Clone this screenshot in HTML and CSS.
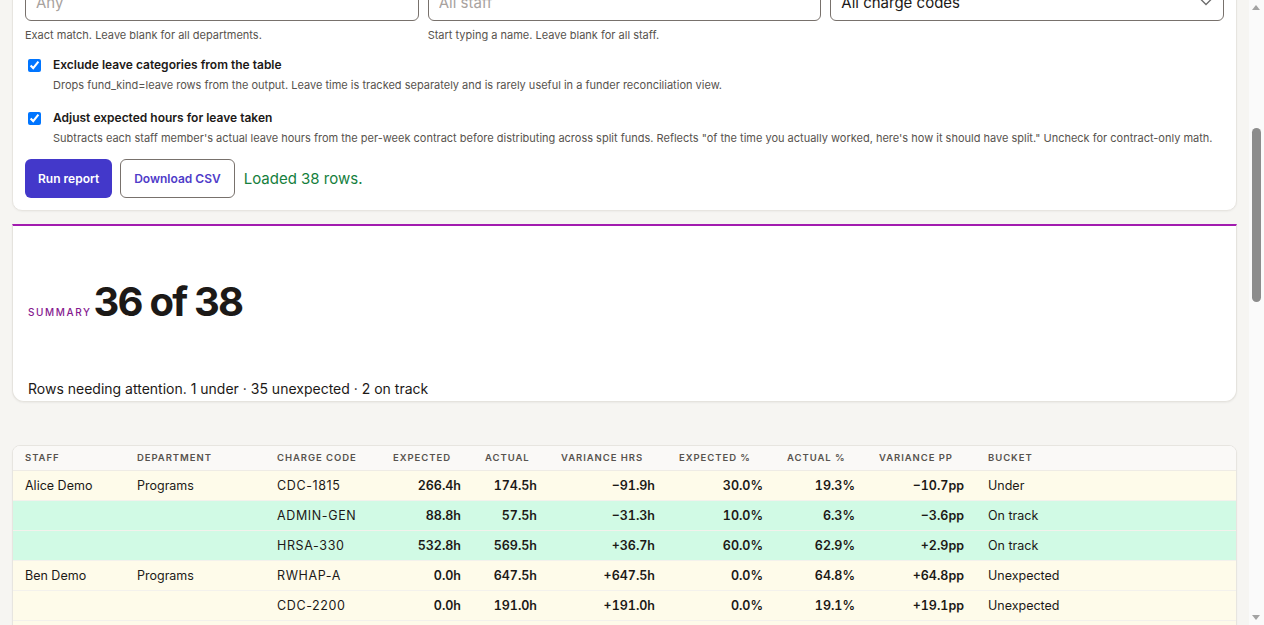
FILE: index.html
```html
<!DOCTYPE html>
<html lang="en">
<head>
    <meta charset="UTF-8">
    <meta name="viewport" content="width=device-width, initial-scale=1.0">
    <title>Funder Reconciliation</title>
    <link rel="stylesheet" href="styles.css">
</head>
<body>

    <nav class="topbar">
        <span class="brand">Timesheets</span>
        <a href="#">Entries</a>
        <a href="#">Staff</a>
        <a href="#" class="active">Reports</a>
        <a href="#">Settings</a>
    </nav>

    <main class="page">
        <header class="page-head">
            <h1>Funder reconciliation</h1>
            <p>Compare each staff member's expected split across charge codes with the hours they actually logged.</p>
        </header>

        <form class="card filters" onsubmit="event.preventDefault()">
            <h2 class="card-title">Report scope</h2>

            <div class="fields two">
                <div class="field">
                    <label for="date_from">Period start</label>
                    <input type="date" id="date_from" value="2024-07-01">
                    <small>First day of the reporting period.</small>
                </div>
                <div class="field">
                    <label for="date_to">Period end</label>
                    <input type="date" id="date_to" value="2025-06-30">
                    <small>Last day, inclusive.</small>
                </div>
            </div>

            <div class="fields three">
                <div class="field">
                    <label for="department">Department</label>
                    <input type="text" id="department" placeholder="Any">
                    <small>Exact match. Leave blank for all departments.</small>
                </div>
                <div class="field">
                    <label for="staff">Staff</label>
                    <input type="text" id="staff" placeholder="All staff">
                    <small>Start typing a name. Leave blank for all staff.</small>
                </div>
                <div class="field">
                    <label for="charge_code">Charge code</label>
                    <div class="select-wrap">
                        <select id="charge_code">
                            <option>All charge codes</option>
                            <option>ADMIN-GEN</option>
                            <option>CDC-1815</option>
                            <option>CDC-2200</option>
                            <option>HRSA-330</option>
                            <option>RWHAP-A</option>
                        </select>
                        <svg class="chevron" width="12" height="8" viewBox="0 0 12 8"><path d="M1 1.5l5 5 5-5" fill="none" stroke="#6b6b6b" stroke-width="1.3"/></svg>
                    </div>
                </div>
            </div>

            <label class="check">
                <input type="checkbox" checked>
                <span class="check-title">Exclude leave categories from the table</span>
                <span class="check-desc">Drops fund_kind=leave rows from the output. Leave time is tracked separately and is rarely useful in a funder reconciliation view.</span>
            </label>

            <label class="check">
                <input type="checkbox" checked>
                <span class="check-title">Adjust expected hours for leave taken</span>
                <span class="check-desc">Subtracts each staff member's actual leave hours from the per-week contract before distributing across split funds. Reflects "of the time you actually worked, here's how it should have split." Uncheck for contract-only math.</span>
            </label>

            <div class="actions">
                <button type="submit" class="btn-primary">Run report</button>
                <button type="button" class="btn-outline">Download CSV</button>
                <span class="status">Loaded 38 rows.</span>
            </div>
        </form>

        <section class="summary">
            <div class="summary-head">
                <span class="eyebrow">Summary</span>
                <span class="big">36 of 38</span>
            </div>
            <p class="summary-note">Rows needing attention. 1 under · 35 unexpected · 2 on track</p>
        </section>

        <section class="card table-card">
            <table>
                <colgroup>
                    <col style="width:112px"><col style="width:140px"><col style="width:116px">
                    <col style="width:92px"><col style="width:76px"><col style="width:118px">
                    <col style="width:108px"><col style="width:92px"><col style="width:109px"><col>
                </colgroup>
                <thead>
                    <tr>
                        <th>Staff</th><th>Department</th><th>Charge code</th><th>Expected</th><th>Actual</th>
                        <th>Variance hrs</th><th>Expected %</th><th>Actual %</th><th>Variance pp</th><th>Bucket</th>
                    </tr>
                </thead>
                <tbody>
                    <tr class="under"><td>Alice Demo</td><td>Programs</td><td class="code">CDC-1815</td><td class="num">266.4h</td><td class="num">174.5h</td><td class="num">−91.9h</td><td class="num">30.0%</td><td class="num">19.3%</td><td class="num">−10.7pp</td><td>Under</td></tr>
                    <tr class="ok"><td></td><td></td><td class="code">ADMIN-GEN</td><td class="num">88.8h</td><td class="num">57.5h</td><td class="num">−31.3h</td><td class="num">10.0%</td><td class="num">6.3%</td><td class="num">−3.6pp</td><td>On track</td></tr>
                    <tr class="ok"><td></td><td></td><td class="code">HRSA-330</td><td class="num">532.8h</td><td class="num">569.5h</td><td class="num">+36.7h</td><td class="num">60.0%</td><td class="num">62.9%</td><td class="num">+2.9pp</td><td>On track</td></tr>
                    <tr><td>Ben Demo</td><td>Programs</td><td class="code">RWHAP-A</td><td class="num">0.0h</td><td class="num">647.5h</td><td class="num">+647.5h</td><td class="num">0.0%</td><td class="num">64.8%</td><td class="num">+64.8pp</td><td>Unexpected</td></tr>
                    <tr><td></td><td></td><td class="code">CDC-2200</td><td class="num">0.0h</td><td class="num">191.0h</td><td class="num">+191.0h</td><td class="num">0.0%</td><td class="num">19.1%</td><td class="num">+19.1pp</td><td>Unexpected</td></tr>
                    <tr><td></td><td></td><td class="code">ADMIN-GEN</td><td class="num">0.0h</td><td class="num">160.5h</td><td class="num">+160.5h</td><td class="num">0.0%</td><td class="num">16.1%</td><td class="num">+16.1pp</td><td>Unexpected</td></tr>
                    <tr><td>Carla Demo</td><td>Clinical</td><td class="code">HRSA-330</td><td class="num">0.0h</td><td class="num">812.0h</td><td class="num">+812.0h</td><td class="num">0.0%</td><td class="num">81.2%</td><td class="num">+81.2pp</td><td>Unexpected</td></tr>
                    <tr><td></td><td></td><td class="code">RWHAP-B</td><td class="num">0.0h</td><td class="num">188.0h</td><td class="num">+188.0h</td><td class="num">0.0%</td><td class="num">18.8%</td><td class="num">+18.8pp</td><td>Unexpected</td></tr>
                    <tr><td>Dev Demo</td><td>Clinical</td><td class="code">HRSA-330</td><td class="num">0.0h</td><td class="num">540.0h</td><td class="num">+540.0h</td><td class="num">0.0%</td><td class="num">54.0%</td><td class="num">+54.0pp</td><td>Unexpected</td></tr>
                    <tr><td></td><td></td><td class="code">CDC-1815</td><td class="num">0.0h</td><td class="num">300.0h</td><td class="num">+300.0h</td><td class="num">0.0%</td><td class="num">30.0%</td><td class="num">+30.0pp</td><td>Unexpected</td></tr>
                    <tr><td></td><td></td><td class="code">ADMIN-GEN</td><td class="num">0.0h</td><td class="num">160.0h</td><td class="num">+160.0h</td><td class="num">0.0%</td><td class="num">16.0%</td><td class="num">+16.0pp</td><td>Unexpected</td></tr>
                    <tr><td>Elena Demo</td><td>Operations</td><td class="code">ADMIN-GEN</td><td class="num">0.0h</td><td class="num">960.0h</td><td class="num">+960.0h</td><td class="num">0.0%</td><td class="num">96.0%</td><td class="num">+96.0pp</td><td>Unexpected</td></tr>
                    <tr><td></td><td></td><td class="code">FACILITIES</td><td class="num">0.0h</td><td class="num">40.0h</td><td class="num">+40.0h</td><td class="num">0.0%</td><td class="num">4.0%</td><td class="num">+4.0pp</td><td>Unexpected</td></tr>
                    <tr><td>Farid Demo</td><td>Outreach</td><td class="code">CDC-2200</td><td class="num">0.0h</td><td class="num">620.5h</td><td class="num">+620.5h</td><td class="num">0.0%</td><td class="num">62.1%</td><td class="num">+62.1pp</td><td>Unexpected</td></tr>
                    <tr><td></td><td></td><td class="code">RWHAP-A</td><td class="num">0.0h</td><td class="num">378.5h</td><td class="num">+378.5h</td><td class="num">0.0%</td><td class="num">37.9%</td><td class="num">+37.9pp</td><td>Unexpected</td></tr>
                    <tr><td>Grace Demo</td><td>Programs</td><td class="code">RWHAP-A</td><td class="num">0.0h</td><td class="num">500.0h</td><td class="num">+500.0h</td><td class="num">0.0%</td><td class="num">50.0%</td><td class="num">+50.0pp</td><td>Unexpected</td></tr>
                    <tr><td></td><td></td><td class="code">RWHAP-B</td><td class="num">0.0h</td><td class="num">300.0h</td><td class="num">+300.0h</td><td class="num">0.0%</td><td class="num">30.0%</td><td class="num">+30.0pp</td><td>Unexpected</td></tr>
                    <tr><td></td><td></td><td class="code">CDC-1815</td><td class="num">0.0h</td><td class="num">200.0h</td><td class="num">+200.0h</td><td class="num">0.0%</td><td class="num">20.0%</td><td class="num">+20.0pp</td><td>Unexpected</td></tr>
                    <tr><td>Hiro Demo</td><td>Clinical</td><td class="code">HRSA-330</td><td class="num">0.0h</td><td class="num">700.0h</td><td class="num">+700.0h</td><td class="num">0.0%</td><td class="num">70.0%</td><td class="num">+70.0pp</td><td>Unexpected</td></tr>
                    <tr><td></td><td></td><td class="code">SAMHSA-12</td><td class="num">0.0h</td><td class="num">300.0h</td><td class="num">+300.0h</td><td class="num">0.0%</td><td class="num">30.0%</td><td class="num">+30.0pp</td><td>Unexpected</td></tr>
                    <tr><td>Imani Demo</td><td>Behavioral</td><td class="code">SAMHSA-12</td><td class="num">0.0h</td><td class="num">780.0h</td><td class="num">+780.0h</td><td class="num">0.0%</td><td class="num">78.0%</td><td class="num">+78.0pp</td><td>Unexpected</td></tr>
                    <tr><td></td><td></td><td class="code">ADMIN-GEN</td><td class="num">0.0h</td><td class="num">220.0h</td><td class="num">+220.0h</td><td class="num">0.0%</td><td class="num">22.0%</td><td class="num">+22.0pp</td><td>Unexpected</td></tr>
                    <tr><td>Jonah Demo</td><td>Outreach</td><td class="code">CDC-2200</td><td class="num">0.0h</td><td class="num">450.0h</td><td class="num">+450.0h</td><td class="num">0.0%</td><td class="num">45.0%</td><td class="num">+45.0pp</td><td>Unexpected</td></tr>
                    <tr><td></td><td></td><td class="code">CDC-1815</td><td class="num">0.0h</td><td class="num">350.0h</td><td class="num">+350.0h</td><td class="num">0.0%</td><td class="num">35.0%</td><td class="num">+35.0pp</td><td>Unexpected</td></tr>
                    <tr><td></td><td></td><td class="code">RWHAP-A</td><td class="num">0.0h</td><td class="num">200.0h</td><td class="num">+200.0h</td><td class="num">0.0%</td><td class="num">20.0%</td><td class="num">+20.0pp</td><td>Unexpected</td></tr>
                    <tr><td>Kira Demo</td><td>Operations</td><td class="code">ADMIN-GEN</td><td class="num">0.0h</td><td class="num">880.0h</td><td class="num">+880.0h</td><td class="num">0.0%</td><td class="num">88.0%</td><td class="num">+88.0pp</td><td>Unexpected</td></tr>
                    <tr><td></td><td></td><td class="code">FACILITIES</td><td class="num">0.0h</td><td class="num">120.0h</td><td class="num">+120.0h</td><td class="num">0.0%</td><td class="num">12.0%</td><td class="num">+12.0pp</td><td>Unexpected</td></tr>
                    <tr><td>Luis Demo</td><td>Programs</td><td class="code">RWHAP-B</td><td class="num">0.0h</td><td class="num">640.0h</td><td class="num">+640.0h</td><td class="num">0.0%</td><td class="num">64.0%</td><td class="num">+64.0pp</td><td>Unexpected</td></tr>
                    <tr><td></td><td></td><td class="code">HRSA-330</td><td class="num">0.0h</td><td class="num">360.0h</td><td class="num">+360.0h</td><td class="num">0.0%</td><td class="num">36.0%</td><td class="num">+36.0pp</td><td>Unexpected</td></tr>
                    <tr><td>Maya Demo</td><td>Clinical</td><td class="code">HRSA-330</td><td class="num">0.0h</td><td class="num">610.0h</td><td class="num">+610.0h</td><td class="num">0.0%</td><td class="num">61.0%</td><td class="num">+61.0pp</td><td>Unexpected</td></tr>
                    <tr><td></td><td></td><td class="code">RWHAP-A</td><td class="num">0.0h</td><td class="num">250.0h</td><td class="num">+250.0h</td><td class="num">0.0%</td><td class="num">25.0%</td><td class="num">+25.0pp</td><td>Unexpected</td></tr>
                    <tr><td></td><td></td><td class="code">ADMIN-GEN</td><td class="num">0.0h</td><td class="num">140.0h</td><td class="num">+140.0h</td><td class="num">0.0%</td><td class="num">14.0%</td><td class="num">+14.0pp</td><td>Unexpected</td></tr>
                    <tr><td>Noor Demo</td><td>Behavioral</td><td class="code">SAMHSA-12</td><td class="num">0.0h</td><td class="num">520.0h</td><td class="num">+520.0h</td><td class="num">0.0%</td><td class="num">52.0%</td><td class="num">+52.0pp</td><td>Unexpected</td></tr>
                    <tr><td></td><td></td><td class="code">CDC-1815</td><td class="num">0.0h</td><td class="num">480.0h</td><td class="num">+480.0h</td><td class="num">0.0%</td><td class="num">48.0%</td><td class="num">+48.0pp</td><td>Unexpected</td></tr>
                    <tr><td>Omar Demo</td><td>Outreach</td><td class="code">CDC-2200</td><td class="num">0.0h</td><td class="num">900.0h</td><td class="num">+900.0h</td><td class="num">0.0%</td><td class="num">90.0%</td><td class="num">+90.0pp</td><td>Unexpected</td></tr>
                    <tr><td></td><td></td><td class="code">ADMIN-GEN</td><td class="num">0.0h</td><td class="num">100.0h</td><td class="num">+100.0h</td><td class="num">0.0%</td><td class="num">10.0%</td><td class="num">+10.0pp</td><td>Unexpected</td></tr>
                    <tr><td>Priya Demo</td><td>Programs</td><td class="code">RWHAP-A</td><td class="num">0.0h</td><td class="num">1000.0h</td><td class="num">+1000.0h</td><td class="num">0.0%</td><td class="num">100.0%</td><td class="num">+100.0pp</td><td>Unexpected</td></tr>
                    <tr><td>Quinn Demo</td><td>Operations</td><td class="code">ADMIN-GEN</td><td class="num">0.0h</td><td class="num">1000.0h</td><td class="num">+1000.0h</td><td class="num">0.0%</td><td class="num">100.0%</td><td class="num">+100.0pp</td><td>Unexpected</td></tr>
                </tbody>
            </table>
        </section>
    </main>

    <!-- window scrollbar, drawn since the headless view hides the native one -->
    <div class="scrollbar">
        <span class="arrow up"></span>
        <span class="thumb"></span>
        <span class="arrow down"></span>
    </div>

    <script>
        let dept = document.getElementById('department');
        window.scrollTo(0, dept.getBoundingClientRect().bottom - 21);
    </script>
</body>
</html>
```

FILE: styles.css
```css
body {
    margin: 0;
    background: #f6f5f2;
    font-family: Inter, "Noto Sans", sans-serif;
    color: #1c1917;
}
.topbar {
    display: flex;
    align-items: center;
    gap: 20px;
    height: 52px;
    padding: 0 24px;
    background: #fff;
    border-bottom: 1px solid #e7e5e4;
    font-size: 14px;
}
.topbar .brand {
    font-weight: 700;
    margin-right: 12px;
}
.topbar a {
    color: #57534e;
    text-decoration: none;
}
.topbar a.active {
    color: #4338ca;
    font-weight: 600;
}
.page {
    padding: 24px 27px 60px 12px;
}
.page-head h1 {
    margin: 0;
    font-size: 24px;
    line-height: 30px;
}
.page-head p {
    margin: 4px 0 20px;
    font-size: 14px;
    color: #57534e;
}
.card {
    background: #fff;
    border: 1px solid #e7e5e0;
    border-radius: 10px;
    box-shadow: 0 1px 2px rgba(0, 0, 0, 0.04);
}
.filters {
    padding: 12px;
}
.card-title {
    margin: 0 0 12px;
    font-size: 14px;
    line-height: 20px;
}
.fields {
    display: grid;
    gap: 9px;
}
.fields.two {
    grid-template-columns: 1fr 1fr;
    margin-bottom: 16px;
}
.fields.three {
    grid-template-columns: 1fr 1fr 1fr;
}
.field label {
    display: block;
    font-size: 12px;
    font-weight: 600;
    line-height: 16px;
    margin-bottom: 6px;
}
.field input, .field select {
    box-sizing: border-box;
    width: 100%;
    height: 38px;
    padding: 0 10px;
    border: 1px solid #78716c;
    border-radius: 6px;
    background: #fff;
    font-family: inherit;
    font-size: 15px;
    color: #1c1917;
}
.field select {
    appearance: none;
}
.field input::placeholder {
    color: #a8a29e;
}
.select-wrap {
    position: relative;
}
.chevron {
    position: absolute;
    right: 12px;
    top: 15px;
    pointer-events: none;
}
.field small {
    display: block;
    margin-top: 7px;
    font-size: 11px;
    line-height: 14px;
    color: #57534e;
}
.check {
    display: grid;
    grid-template-columns: 28px 1fr;
    row-gap: 4px;
    margin-top: 14px;
    cursor: pointer;
}
.check + .check {
    margin-top: 16px;
}
.check input {
    margin: 3px 0 0 3px;
    width: 13px;
    height: 13px;
}
.check-title {
    font-size: 12px;
    font-weight: 600;
    line-height: 18px;
}
.check-desc {
    grid-column: 2;
    font-size: 11px;
    line-height: 15px;
    color: #57534e;
}
.actions {
    display: flex;
    align-items: center;
    gap: 8px;
    margin-top: 13px;
}
.actions button {
    height: 39px;
    padding: 0 13px;
    border-radius: 6px;
    font-family: inherit;
    font-size: 12px;
    font-weight: 600;
    cursor: pointer;
}
.btn-primary {
    background: #4338ca;
    color: #fff;
    border: none;
}
.btn-outline {
    padding: 0 12px;
    background: #fff;
    color: #4f3cc9;
    border: 1px solid #78716c;
}
.status {
    margin-left: 1px;
    font-size: 15px;
    color: #15803d;
}
.summary {
    margin-top: 13px;
    padding: 0 15px 3px;
    background: #fff;
    border: 1px solid #e5e3de;
    border-top: 2px solid #a21caf;
    border-radius: 0 0 12px 12px;
    box-shadow: 0 1px 2px rgba(0, 0, 0, 0.05);
}
.summary-head {
    display: flex;
    align-items: baseline;
    gap: 2px;
    margin-top: 56px;
}
.eyebrow {
    font-size: 10px;
    font-weight: 500;
    letter-spacing: 0.16em;
    text-transform: uppercase;
    color: #86198f;
}
.big {
    font-size: 40px;
    line-height: 40px;
    font-weight: 700;
    letter-spacing: -0.045em;
}
.summary-note {
    margin: 58px 0 0;
    font-size: 14px;
    line-height: 18px;
}
.table-card {
    margin-top: 43px;
    border-radius: 8px;
    overflow: hidden;
}
table {
    width: 100%;
    border-collapse: collapse;
    table-layout: fixed;
}
th {
    height: 23px;
    padding: 0 12px 1px;
    background: #faf9f7;
    border-bottom: 1px solid #eeebe5;
    text-align: left;
    font-size: 9.5px;
    font-weight: 600;
    letter-spacing: 0.1em;
    text-transform: uppercase;
    color: #57534e;
}
td {
    height: 29px;
    padding: 0 12px;
    border-bottom: 1px solid #f3f1ec;
    background: #fefbea;
    font-size: 12.5px;
    white-space: nowrap;
}
tr.ok td {
    background: #d1fae5;
}
td.code {
    letter-spacing: 0.05em;
}
td.num {
    text-align: right;
    font-weight: 600;
    font-variant-numeric: tabular-nums;
}
.scrollbar {
    position: fixed;
    top: 0;
    right: 0;
    bottom: 0;
    width: 15px;
    background: #fafafa;
}
.thumb {
    position: absolute;
    top: 128px;
    left: 3px;
    width: 9px;
    height: 174px;
    border-radius: 5px;
    background: #8c8c8c;
}
.arrow {
    position: absolute;
    left: 3px;
    width: 0;
    height: 0;
    border-left: 4.5px solid transparent;
    border-right: 4.5px solid transparent;
}
.arrow.up {
    top: 5px;
    border-bottom: 5px solid #a3a3a3;
}
.arrow.down {
    bottom: 5px;
    border-top: 5px solid #a3a3a3;
}
```
